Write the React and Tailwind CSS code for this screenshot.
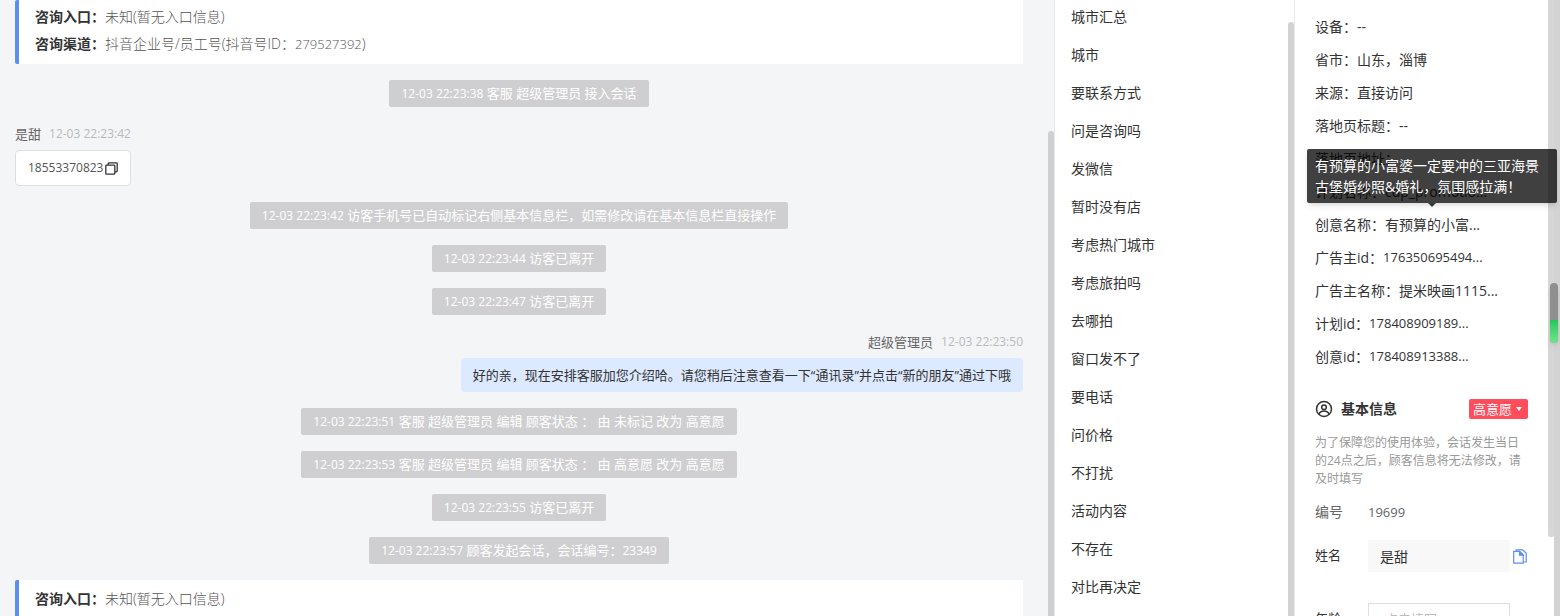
import { useState } from "react";

const visitorInfo = [
  { label: "设备", value: "--" },
  { label: "省市", value: "山东，淄博" },
  { label: "来源", value: "直接访问" },
  { label: "落地页标题", value: "--" },
  { label: "落地页地址", value: "" },
  { label: "计划名称", value: "cdp_promotio..." },
  {
    label: "创意名称",
    value: "有预算的小富...",
    tip: "有预算的小富婆一定要冲的三亚海景古堡婚纱照&婚礼，氛围感拉满！",
  },
  { label: "广告主id", value: "176350695494..." },
  { label: "广告主名称", value: "提米映画1115..." },
  { label: "计划id", value: "178408909189..." },
  { label: "创意id", value: "178408913388..." },
];

const quickReplies = [
  "城市汇总",
  "城市",
  "要联系方式",
  "问是咨询吗",
  "发微信",
  "暂时没有店",
  "考虑热门城市",
  "考虑旅拍吗",
  "去哪拍",
  "窗口发不了",
  "要电话",
  "问价格",
  "不打扰",
  "活动内容",
  "不存在",
  "对比再决定",
];

function Notice({ time, children }) {
  return (
    <p className="self-center rounded-xs bg-[#cfcfd1] px-3 text-[13px] leading-[27px] text-white">
      <span className="text-xs leading-none">{time}</span> {children}
    </p>
  );
}

function MessageHead({ name, time }) {
  return (
    <div className="mb-[5px] flex items-center gap-2 text-[13px] leading-[22px] text-[#666]">
      <span>{name}</span>
      <time className="text-xs leading-[22px] text-[#b8babf]">{time}</time>
    </div>
  );
}

function EntryCard({ children }) {
  return (
    <dl className="rounded-l-xs border-l-4 border-[#5b8ff0] bg-white px-4 text-sm leading-[27px]">
      {children}
    </dl>
  );
}

function EntryRow({ label, children }) {
  return (
    <div className="flex">
      <dt className="font-bold text-[#333]">{label}：</dt>
      <dd className="font-light text-[#555]">{children}</dd>
    </div>
  );
}

function CopyIcon() {
  return (
    <svg width="13" height="13" viewBox="0 0 13 13" fill="none" stroke="#333" strokeWidth="1.3">
      <rect x="0.8" y="3.2" width="9" height="9" rx="0.8" />
      <path d="M3.2 3V1.5a.7.7 0 0 1 .7-.7h7.6a.7.7 0 0 1 .7.7v7.6a.7.7 0 0 1-.7.7H10" />
    </svg>
  );
}

function PagesIcon() {
  return (
    <svg width="14" height="15" viewBox="0 0 14 15" fill="none" stroke="#5b8ff0" strokeWidth="1.2">
      <path d="M.7 2.400h5.800l3.700 3.600v8.200H.7z" />
      <path d="M6.500 2.400v3.700h3.700z" fill="#5b8ff0" />
      <path d="M3.200 2.200V.8h6.300l3.700 3.200v9h-2.800" />
    </svg>
  );
}

function UserIcon() {
  return (
    <svg width="18" height="18" viewBox="0 0 18 18" fill="none" stroke="#333" strokeWidth="1.5">
      <circle cx="9" cy="9" r="7.5" />
      <circle cx="9" cy="7.2" r="2.3" />
      <path d="M4 14.2c.7-2.1 2.6-3.2 5-3.2s4.300 1.100 5 3.200" />
    </svg>
  );
}

function ChatPanel() {
  return (
    <main className="flex min-w-0 flex-1 bg-[#f4f5f7]">
      <div className="flex flex-1 flex-col gap-4 pr-[25px] pl-[15px]">
        <EntryCard>
          <div className="pt-[3px] pb-[7px]">
            <EntryRow label="咨询入口">未知(暂无入口信息)</EntryRow>
            <EntryRow label="咨询渠道">
              抖音企业号/员工号(抖音号ID：
              <span className="text-[13px] leading-none">279527392</span>)
            </EntryRow>
          </div>
        </EntryCard>

        <Notice time="12-03 22:23:38">客服 超级管理员 接入会话</Notice>

        <div className="flex flex-col items-start">
          <MessageHead name="是甜" time="12-03 22:23:42" />
          <div className="flex items-center gap-0.5 rounded-sm border border-[#dcdee2] bg-white px-3 text-xs leading-[34px] text-[#555]">
            18553370823
            <button type="button" aria-label="复制">
              <CopyIcon />
            </button>
          </div>
        </div>

        <Notice time="12-03 22:23:42">
          访客手机号已自动标记右侧基本信息栏，如需修改请在基本信息栏直接操作
        </Notice>
        <Notice time="12-03 22:23:44">访客已离开</Notice>
        <Notice time="12-03 22:23:47">访客已离开</Notice>

        <div className="flex flex-col items-end">
          <MessageHead name="超级管理员" time="12-03 22:23:50" />
          <p className="rounded-sm bg-[#dce9ff] px-3 text-[13px] leading-[34px] text-[#333]">
            好的亲，现在安排客服加您介绍哈。请您稍后注意查看一下“通讯录”并点击“新的朋友”通过下哦
          </p>
        </div>

        <Notice time="12-03 22:23:51">客服 超级管理员 编辑 顾客状态 ： 由 未标记 改为 高意愿</Notice>
        <Notice time="12-03 22:23:53">客服 超级管理员 编辑 顾客状态 ： 由 高意愿 改为 高意愿</Notice>
        <Notice time="12-03 22:23:55">访客已离开</Notice>
        <Notice time="12-03 22:23:57">
          顾客发起会话，会话编号：<span className="text-xs leading-none">23349</span>
        </Notice>

        <EntryCard>
          <div className="py-[5px]">
            <EntryRow label="咨询入口">未知(暂无入口信息)</EntryRow>
          </div>
        </EntryCard>
      </div>
      <div className="flex w-[6px] pt-[131px]">
        <div className="flex-1 rounded-t-full bg-[#d0d0d0]" />
      </div>
    </main>
  );
}

function QuickReplies() {
  return (
    <nav className="flex w-[241px] shrink-0 border-x border-[#e8e8e8] bg-white">
      <ul className="-mt-[2px] flex-1 pl-4 text-sm leading-[38px] text-[#333]">
        {quickReplies.map((r) => (
          <li key={r}>{r}</li>
        ))}
      </ul>
      <div className="flex w-[6px] pt-[22px]">
        <div className="flex-1 rounded-t-full bg-[#d3d3d3]" />
      </div>
    </nav>
  );
}

function InfoRow({ label, value, tip }) {
  return (
    <li className="relative flex h-[33px] items-center whitespace-nowrap">
      {label}：<span className={/^\d/.test(value) ? "text-[13px]" : ""}>{value}</span>
      {tip && (
        <div
          role="tooltip"
          className="absolute bottom-full -left-2 mb-[5px] w-[250px] rounded-xs bg-black/75 px-2 py-[6px] leading-[21px] whitespace-normal text-white shadow-md"
        >
          {tip}
          <span className="absolute top-full left-1/2 -translate-x-1/2 border-x-4 border-t-4 border-x-transparent border-t-black/75" />
        </div>
      )}
    </li>
  );
}

function CustomerPanel() {
  const [name, setName] = useState("是甜");
  const [age, setAge] = useState("");

  return (
    <aside className="relative flex w-[265px] shrink-0 bg-white">
      <div className="min-w-0 flex-1 px-5 pt-[10px]">
        <ul className="text-sm text-[#333]">
          {visitorInfo.map((v) => (
            <InfoRow key={v.label} {...v} />
          ))}
        </ul>

        <div className="mt-[26px] flex items-center">
          <UserIcon />
          <h2 className="ml-2 flex-1 text-sm leading-5 font-bold text-[#333]">基本信息</h2>
          <button
            type="button"
            className="flex items-center gap-1 rounded-xs bg-[#ff4d5b] px-1 text-[13px] leading-5 text-white"
          >
            高意愿
            <span className="mr-[2px] border-x-3 border-t-4 border-x-transparent border-t-white" />
          </button>
        </div>

        <p className="mt-[15px] text-xs leading-[18px] text-[#999]">
          为了保障您的使用体验，会话发生当日的24点之后，顾客信息将无法修改，请及时填写
        </p>

        <div className="mt-3 flex items-center text-sm leading-6 text-[#666]">
          <span className="w-[53px]">编号</span>
          <span className="text-[13px] leading-6">19699</span>
        </div>

        <div className="mt-4 flex items-center">
          <label htmlFor="name" className="w-[53px] text-[13px] text-[#333]">
            姓名
          </label>
          <input
            id="name"
            value={name}
            onChange={(e) => setName(e.target.value)}
            className="h-8 w-[142px] bg-[#f8f8f9] px-3 text-sm text-[#333]"
          />
          <button type="button" aria-label="复制姓名" className="ml-[3px]">
            <PagesIcon />
          </button>
        </div>

        <div className="mt-[31px] flex items-center">
          <label htmlFor="age" className="w-[53px] text-[13px] text-[#333]">
            年龄
          </label>
          <input
            id="age"
            value={age}
            placeholder="点击填写"
            onChange={(e) => setAge(e.target.value)}
            className="h-8 w-[142px] border border-[#dcdee2] px-4 text-[13px] placeholder:text-[#bbb]"
          />
        </div>
      </div>

      {/* inner and outer scrollbars */}
      <div className="h-[537px] w-[6px] rounded-b-xs bg-[#d6d6d6]" />
      <div className="w-[6px] bg-[#d3d3d3]" />
      <div className="absolute top-[283px] right-[2px] flex h-[60px] w-2 flex-col overflow-hidden rounded-full bg-[#8f8f8f] shadow-md">
        <div className="mt-auto h-[23px] bg-linear-to-b from-[#22c55e] to-[#6fe68a]" />
      </div>
    </aside>
  );
}

export default function App() {
  return (
    <div className="flex h-screen overflow-hidden font-['Open_Sans','Noto_Sans_CJK_SC',sans-serif]">
      <ChatPanel />
      <QuickReplies />
      <CustomerPanel />
    </div>
  );
}
